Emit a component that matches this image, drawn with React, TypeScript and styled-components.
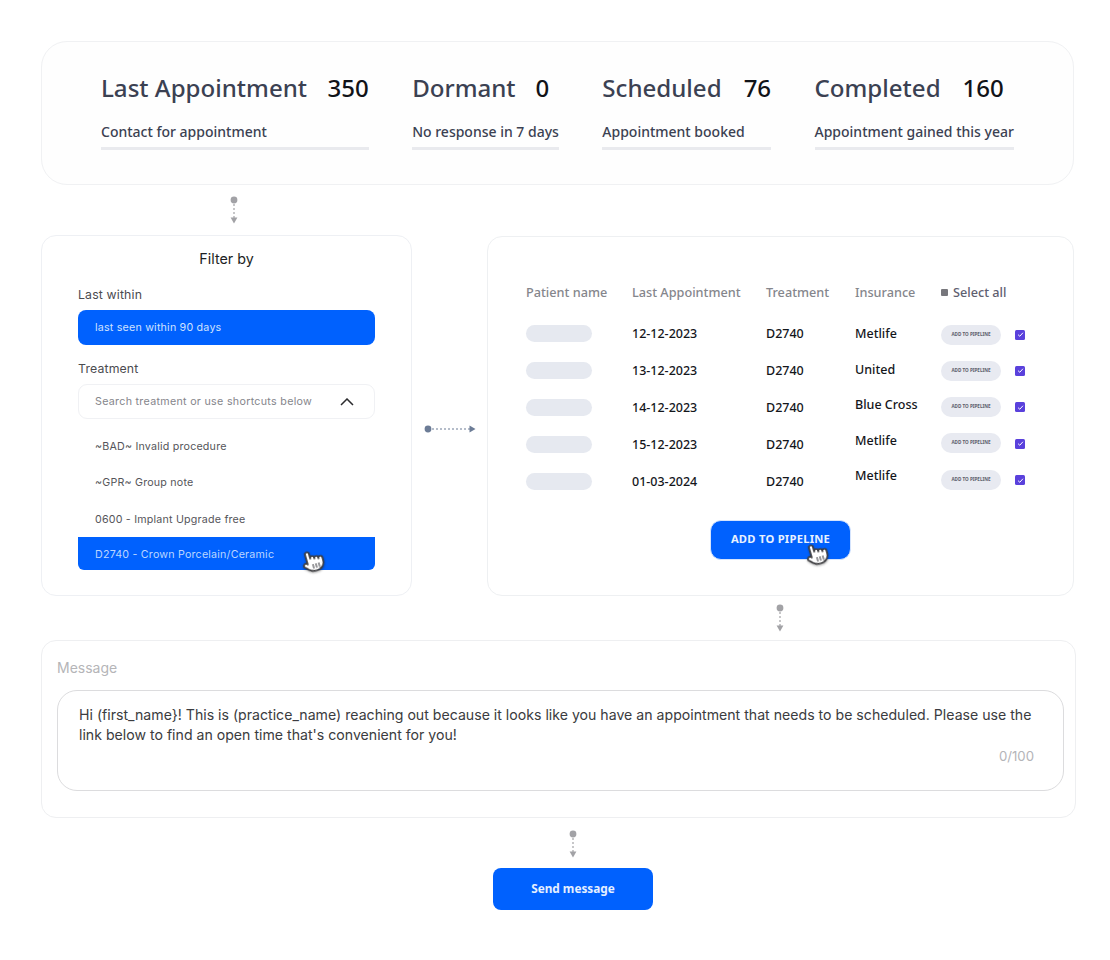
import React from "react";
import styled, { createGlobalStyle } from "styled-components";

const Global = createGlobalStyle`
  html, body { margin: 0; padding: 0; background: #fff; }
  * { box-sizing: border-box; }
`;

const Page = styled.div`
  width: 1110px;
  height: 960px;
  padding: 41px 34px 0 41px;
  display: flex;
  flex-direction: column;
  font-family: "Noto Sans", sans-serif;
`;

const StatsCard = styled.section`
  width: 1033px;
  height: 144px;
  border: 1px solid #f0f1f3;
  border-radius: 26px;
  background: #fefefe;
  padding: 28px 0 0 59px;
  display: flex;
  gap: 43.4px;
`;

const Stat = styled.div`
  display: flex;
  flex-direction: column;
  width: max-content;
`;

const StatHead = styled.div<{ $gap: number }>`
  display: flex;
  gap: ${(p) => p.$gap}px;
  height: 36px;
  line-height: 36px;
`;

const StatTitle = styled.span`
  font-size: 24.1px;
  font-weight: 500;
  color: #3b4152;
`;

const StatValue = styled.span`
  font-size: 24px;
  color: #111318;
  font-weight: 500;
`;

const StatSub = styled.div`
  margin-top: 14px;
  height: 30px;
  line-height: 24px;
  font-size: 14px;
  font-weight: 500;
  color: #3b4152;
  border-bottom: 3px solid #e9eaee;
  white-space: nowrap;
`;

const VSlot = styled.div<{ $height: number; $center: number; $nudge?: number }>`
  height: ${(p) => p.$height}px;
  display: flex;
  align-items: center;
  padding-left: ${(p) => p.$center - 46}px;
  padding-top: ${(p) => p.$nudge ?? 0}px;
`;

const MiddleRow = styled.div`
  display: flex;
  height: 361px;
`;

const FilterCard = styled.section`
  width: 371px;
  height: 361px;
  border: 1px solid #eef0f4;
  border-radius: 15px;
  padding: 12px 36px 0;
  display: flex;
  flex-direction: column;
  font-family: Inter, sans-serif;
`;

const FilterTitle = styled.h2`
  margin: 0;
  height: 22px;
  line-height: 22px;
  font-size: 14.3px;
  font-weight: 400;
  color: #1d1f24;
  text-align: center;
`;

const FieldLabel = styled.div<{ $top: number }>`
  margin-top: ${(p) => p.$top}px;
  height: 16px;
  line-height: 16px;
  font-size: 12.3px;
  letter-spacing: 0.15px;
  color: #4b4b50;
`;

const BlueField = styled.div`
  margin-top: 7px;
  height: 35px;
  border-radius: 8px;
  background: #0061fe;
  color: #cfe2ff;
  font-size: 10.7px;
  letter-spacing: 0.2px;
  line-height: 35px;
  padding-left: 17px;
`;

const SearchField = styled.div`
  margin-top: 7px;
  height: 35px;
  border: 1px solid #f0f1f4;
  border-radius: 9px;
  color: #85858b;
  font-size: 10.7px;
  letter-spacing: 0.3px;
  padding: 0 20px 0 16px;
  display: flex;
  align-items: center;
  justify-content: space-between;
`;

const Options = styled.div`
  margin-top: 9px;
  display: flex;
  flex-direction: column;
`;

const Option = styled.div<{ $active?: boolean }>`
  position: relative;
  height: ${(p) => (p.$active ? 33 : 36.3)}px;
  padding: ${(p) => (p.$active ? "3px 0 0 17px" : "1px 0 0 17px")};
  display: flex;
  align-items: center;
  font-size: 10.7px;
  letter-spacing: 0.2px;
  color: ${(p) => (p.$active ? "#bcd6ff" : "#55555a")};
  background: ${(p) => (p.$active ? "#0061fe" : "transparent")};
  border-radius: ${(p) => (p.$active ? "0 0 6px 6px" : "0")};
`;

const HandSpot = styled.span<{ $left: number; $top: number }>`
  position: absolute;
  left: ${(p) => p.$left}px;
  top: ${(p) => p.$top}px;
  display: block;
  width: 24px;
  height: 24px;
  line-height: 0;
`;

const HSlot = styled.div`
  width: 75px;
  display: flex;
  align-items: center;
  justify-content: center;
  padding-top: 26px;
`;

const TableCard = styled.section`
  width: 587px;
  height: 360px;
  margin-top: 1px;
  border: 1px solid #eef0f2;
  border-radius: 15px;
  padding: 45px 0 0 38px;
  display: flex;
  flex-direction: column;
`;

const Columns = styled.div`
  display: flex;
`;

const Column = styled.div<{ $width: number }>`
  width: ${(p) => p.$width}px;
  display: flex;
  flex-direction: column;
`;

const HeadCell = styled.div`
  height: 20px;
  line-height: 20px;
  font-size: 12.7px;
  font-weight: 500;
  color: #85868c;
  white-space: nowrap;
  margin-bottom: 21px;
  display: flex;
  align-items: center;
  gap: 5px;
`;

const SelectHead = styled(HeadCell)`
  color: #5f6070;
`;

const SelectMark = styled.span`
  width: 7px;
  height: 7px;
  background: #77777c;
  border-radius: 1px;
`;

const Rows = styled.div<{ $gap: number; $inset?: number }>`
  display: flex;
  flex-direction: column;
  row-gap: ${(p) => p.$gap}px;
  padding-top: ${(p) => p.$inset ?? 0}px;
`;

const NamePill = styled.div`
  height: 17px;
  width: 66px;
  border-radius: 9px;
  background: #e6e9f0;
`;

const Cell = styled.div`
  height: 22px;
  line-height: 22px;
  font-size: 12.5px;
  font-weight: 500;
  color: #14161b;
  white-space: nowrap;
`;

const ActionPill = styled.div`
  width: 60px;
  height: 20px;
  border-radius: 10px;
  background: #e8eaf1;
  color: #5c5e6c;
  font-size: 4.6px;
  font-weight: 700;
  text-align: center;
  line-height: 19px;
  white-space: nowrap;
`;

const Check = styled.div`
  width: 10px;
  height: 10px;
  border-radius: 1.5px;
  background: #5a41dc;
  display: flex;
  align-items: center;
  justify-content: center;
`;

const PipelineButton = styled.button`
  position: relative;
  align-self: center;
  margin: 27px 0 0 -38px;
  width: 141px;
  height: 40px;
  border: 1px solid #d5e4fd;
  border-radius: 11px;
  background: #0061fe;
  color: #e8f1ff;
  font-family: "Noto Sans", sans-serif;
  font-size: 11.2px;
  font-weight: 700;
  letter-spacing: 0.25px;
  padding: 0 0 3px;
`;

const MessageCard = styled.section`
  width: 1035px;
  height: 178px;
  border: 1px solid #eeeff1;
  border-radius: 15px;
  padding: 17px 11px 0 15px;
  font-family: Inter, sans-serif;
`;

const MessageLabel = styled.div`
  height: 20px;
  line-height: 20px;
  font-size: 14px;
  color: #b5b5b8;
`;

const MessageBox = styled.div`
  margin-top: 12px;
  height: 101px;
  border: 1.5px solid #dcdcde;
  border-radius: 20px;
  padding: 14px 22px 0 21px;
  display: flex;
  flex-direction: column;
`;

const MessageText = styled.p`
  margin: 0;
  font-size: 14.13px;
  line-height: 20px;
  color: #3b3c40;
`;

const Counter = styled.div`
  align-self: flex-end;
  margin: 1px 7px 0 0;
  font-size: 13.2px;
  line-height: 20px;
  color: #b4b4b8;
`;

const SendButton = styled.button`
  margin-left: 452px;
  width: 160px;
  height: 42px;
  border: 0;
  border-radius: 8px;
  background: #0061fe;
  color: #e4efff;
  font-family: "Noto Sans", sans-serif;
  font-size: 11.8px;
  font-weight: 700;
  padding: 0 0 2px;
`;

const VArrow = () => (
  <svg width="10" height="28" viewBox="0 0 10 28" aria-hidden="true">
    <circle cx="5" cy="4" r="3.4" fill="#a2a2a6" />
    <line x1="5" y1="8" x2="5" y2="22" stroke="#a2a2a6" strokeWidth="1.2" strokeDasharray="2 2" />
    <path d="M1.6 21.5h6.8L5 27.5z" fill="#a2a2a6" />
  </svg>
);

const HArrow = () => (
  <svg width="52" height="10" viewBox="0 0 52 10" aria-hidden="true">
    <circle cx="4" cy="5" r="3.4" fill="#6c7c96" />
    <line x1="8" y1="5" x2="46" y2="5" stroke="#6c7c96" strokeWidth="1.1" strokeDasharray="2 2" />
    <path d="M45.5 1.6v6.8L51.5 5z" fill="#6c7c96" />
  </svg>
);

const Hand = () => (
  <svg width="24" height="24" viewBox="0 0 24 24" style={{ transform: "rotate(-16deg)", filter: "drop-shadow(0 1px 1px rgba(0,0,0,.35))" }} aria-hidden="true">
    <path
      d="M6 14V4a2 2 0 0 1 4 0v5a2 2 0 0 1 4 0v1a2 2 0 0 1 4 0v1a2 2 0 0 1 4 0v3a8 8 0 0 1-8 8h-2c-2.8 0-4.5-.86-6-2.34l-3.6-3.6a2 2 0 0 1 2.83-2.82z"
      fill="#fff"
      stroke="#3d3d40"
      strokeWidth="1.7"
      strokeLinejoin="round"
    />
    <path d="M11 15v4.5M14 15v4.5M17 15v4.5" stroke="#55555a" strokeWidth="1.2" fill="none" />
  </svg>
);

const CheckMark = () => (
  <svg width="7" height="7" viewBox="0 0 8 8" aria-hidden="true">
    <path d="M1.2 4.2 3.2 6 6.8 2" fill="none" stroke="#fff" strokeWidth="1.1" />
  </svg>
);

const Chevron = () => (
  <svg width="14" height="8" viewBox="0 0 14 8" aria-hidden="true">
    <path d="M1 7l6-6 6 6" fill="none" stroke="#2b2b2e" strokeWidth="1.5" />
  </svg>
);

const stats = [
  { title: "Last Appointment", value: "350", sub: "Contact for appointment", gap: 20.5 },
  { title: "Dormant", value: "0", sub: "No response in 7 days", gap: 20 },
  { title: "Scheduled", value: "76", sub: "Appointment booked", gap: 22 },
  { title: "Completed", value: "160", sub: "Appointment gained this year", gap: 22 },
];

const dates = ["12-12-2023", "13-12-2023", "14-12-2023", "15-12-2023", "01-03-2024"];
const insurers = ["Metlife", "United", "Blue Cross", "Metlife", "Metlife"];

const messageText =
  "Hi (first_name}! This is (practice_name) reaching out because it looks like you have an appointment that needs to be scheduled. Please use the link below to find an open time that's convenient for you!";

export default function App() {
  return (
    <Page>
      <Global />
      <StatsCard>
        {stats.map((s) => (
          <Stat key={s.title}>
            <StatHead $gap={s.gap}>
              <StatTitle>{s.title}</StatTitle>
              <StatValue>{s.value}</StatValue>
            </StatHead>
            <StatSub>{s.sub}</StatSub>
          </Stat>
        ))}
      </StatsCard>

      <VSlot $height={50} $center={234}>
        <VArrow />
      </VSlot>

      <MiddleRow>
        <FilterCard>
          <FilterTitle>Filter by</FilterTitle>
          <FieldLabel $top={17}>Last within</FieldLabel>
          <BlueField>last seen within 90 days</BlueField>
          <FieldLabel $top={16}>Treatment</FieldLabel>
          <SearchField>
            <span>Search treatment or use shortcuts below</span>
            <Chevron />
          </SearchField>
          <Options>
            <Option>~BAD~ Invalid procedure</Option>
            <Option>~GPR~ Group note</Option>
            <Option>0600 - Implant Upgrade free</Option>
            <Option $active>
              D2740 - Crown Porcelain/Ceramic
              <HandSpot $left={223} $top={12}>
                <Hand />
              </HandSpot>
            </Option>
          </Options>
        </FilterCard>

        <HSlot>
          <HArrow />
        </HSlot>

        <TableCard>
          <Columns>
            <Column $width={106}>
              <HeadCell>Patient name</HeadCell>
              <Rows $gap={20} $inset={2}>
                {dates.map((d) => (
                  <NamePill key={d} />
                ))}
              </Rows>
            </Column>
            <Column $width={134}>
              <HeadCell>Last Appointment</HeadCell>
              <Rows $gap={15}>
                {dates.map((d) => (
                  <Cell key={d}>{d}</Cell>
                ))}
              </Rows>
            </Column>
            <Column $width={89}>
              <HeadCell>Treatment</HeadCell>
              <Rows $gap={15}>
                {dates.map((d) => (
                  <Cell key={d}>D2740</Cell>
                ))}
              </Rows>
            </Column>
            <Column $width={86}>
              <HeadCell>Insurance</HeadCell>
              <Rows $gap={13.5}>
                {insurers.map((n, i) => (
                  <Cell key={i}>{n}</Cell>
                ))}
              </Rows>
            </Column>
            <Column $width={74}>
              <SelectHead>
                <SelectMark />
                Select all
              </SelectHead>
              <Rows $gap={16.3} $inset={1.5}>
                {dates.map((d) => (
                  <ActionPill key={d}>ADD TO PIPELINE</ActionPill>
                ))}
              </Rows>
            </Column>
            <Column $width={20}>
              <HeadCell />
              <Rows $gap={26.4} $inset={6.5}>
                {dates.map((d) => (
                  <Check key={d}>
                    <CheckMark />
                  </Check>
                ))}
              </Rows>
            </Column>
          </Columns>
          <PipelineButton>
            ADD TO PIPELINE
            <HandSpot $left={94} $top={21}>
              <Hand />
            </HandSpot>
          </PipelineButton>
        </TableCard>
      </MiddleRow>

      <VSlot $height={44} $center={780}>
        <VArrow />
      </VSlot>

      <MessageCard>
        <MessageLabel>Message</MessageLabel>
        <MessageBox>
          <MessageText>{messageText}</MessageText>
          <Counter>0/100</Counter>
        </MessageBox>
      </MessageCard>

      <VSlot $height={50} $center={573} $nudge={2}>
        <VArrow />
      </VSlot>

      <SendButton>Send message</SendButton>
    </Page>
  );
}
